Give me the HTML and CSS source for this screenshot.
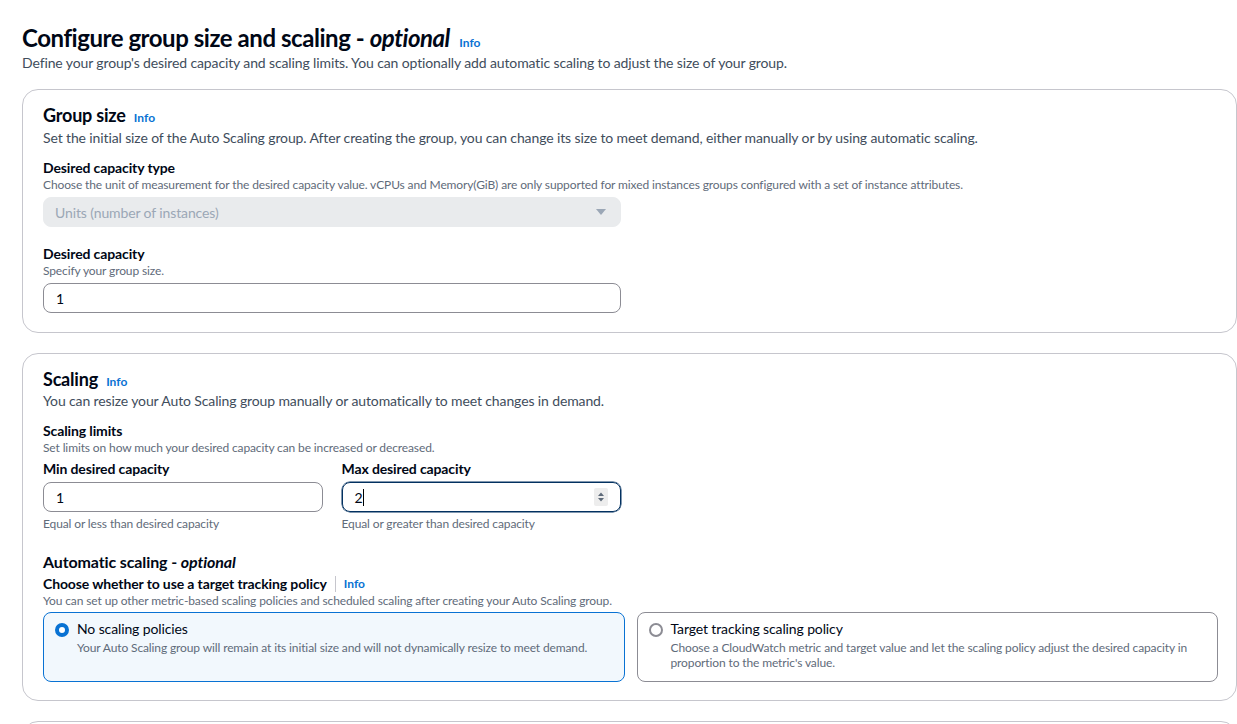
FILE: index.html
```html
<!DOCTYPE html>
<html>
<head>
<meta charset="utf-8">
<link rel="stylesheet" href="styles.css">
</head>
<body>
<div class="page">
  <header class="page-head">
    <h1 class="page-title">Configure group size and scaling - <i>optional</i> <a class="info info-lg">Info</a></h1>
    <p class="page-desc">Define your group's desired capacity and scaling limits. You can optionally add automatic scaling to adjust the size of your group.</p>
  </header>

  <section class="card">
    <h2 class="card-title">Group size <a class="info">Info</a></h2>
    <p class="card-desc">Set the initial size of the Auto Scaling group. After creating the group, you can change its size to meet demand, either manually or by using automatic scaling.</p>

    <div class="field field-first">
      <div class="label">Desired capacity type</div>
      <div class="hint">Choose the unit of measurement for the desired capacity value. vCPUs and Memory(GiB) are only supported for mixed instances groups configured with a set of instance attributes.</div>
      <div class="select">
        <span>Units (number of instances)</span>
        <svg class="caret" width="12" height="8" viewBox="0 0 12 8"><path d="M1 1h10L6 7z" fill="#9ba7b6"/></svg>
      </div>
    </div>

    <div class="field">
      <div class="label">Desired capacity</div>
      <div class="hint">Specify your group size.</div>
      <div class="input">1</div>
    </div>
  </section>

  <section class="card card-scaling">
    <h2 class="card-title">Scaling <a class="info">Info</a></h2>
    <p class="card-desc card-desc-tight">You can resize your Auto Scaling group manually or automatically to meet changes in demand.</p>

    <div class="field field-limits">
      <div class="label">Scaling limits</div>
      <div class="hint">Set limits on how much your desired capacity can be increased or decreased.</div>
      <div class="pair">
        <div class="col">
          <div class="label">Min desired capacity</div>
          <div class="input">1</div>
          <div class="helper">Equal or less than desired capacity</div>
        </div>
        <div class="col">
          <div class="label">Max desired capacity</div>
          <div class="input input-focus"><span>2</span><span class="cursor"></span>
            <svg class="spin" width="14" height="18" viewBox="0 0 14 18"><rect width="14" height="18" rx="2" fill="#ededed"/><path d="M4 8h6L7 4.5z M4 10h6L7 13.5z" fill="#5f6b7a"/></svg>
          </div>
          <div class="helper">Equal or greater than desired capacity</div>
        </div>
      </div>
    </div>

    <h3 class="sub-title">Automatic scaling - <i>optional</i></h3>
    <div class="label label-inline">Choose whether to use a target tracking policy <span class="sep"></span> <a class="info">Info</a></div>
    <div class="hint">You can set up other metric-based scaling policies and scheduled scaling after creating your Auto Scaling group.</div>

    <div class="tiles">
      <div class="tile tile-selected">
        <span class="radio radio-on"></span>
        <div class="tile-text">
          <div class="tile-title">No scaling policies</div>
          <div class="tile-desc">Your Auto Scaling group will remain at its initial size and will not dynamically resize to meet demand.</div>
        </div>
      </div>
      <div class="tile">
        <span class="radio"></span>
        <div class="tile-text">
          <div class="tile-title">Target tracking scaling policy</div>
          <div class="tile-desc">Choose a CloudWatch metric and target value and let the scaling policy adjust the desired capacity in proportion to the metric's value.</div>
        </div>
      </div>
    </div>
  </section>

  <section class="card card-next"></section>
</div>
</body>
</html>
```

FILE: styles.css
```css
* { box-sizing: border-box; }
html, body { margin: 0; padding: 0; }
body {
  background: #ffffff;
  color: #000716;
  font-family: "Lato", "Noto Sans", Arial, sans-serif;
  letter-spacing: -0.12px;
  overflow: hidden;
  height: 724px;
}
.page {
  padding: 23px 0 0 22px;
  width: 1237px;
}
.page-head { margin-bottom: 16px; }
.page-title {
  margin: 0;
  font-size: 24px;
  line-height: 30px;
  font-weight: 700;
  letter-spacing: -0.45px;
}
.page-title i { font-weight: 700; }
.info {
  color: #0972d3;
  font-size: 12px;
  line-height: 1;
  font-weight: 700;
  font-style: normal;
  letter-spacing: 0;
  margin-left: 4px;
}
.page-desc {
  margin: 0;
  font-size: 14px;
  line-height: 20px;
  color: #414d5c;
}
.card {
  width: 1215px;
  border: 1px solid #c6c6cd;
  border-radius: 16px;
  padding: 14px 18px 19px 20px;
  margin-bottom: 20px;
  background: #fff;
}
.card-scaling { padding-bottom: 18px; }
.card-title {
  margin: 0;
  font-size: 18px;
  line-height: 22px;
  font-weight: 700;
  letter-spacing: -0.2px;
}
.card-desc {
  margin: 2px 0 0;
  font-size: 14px;
  line-height: 20px;
  color: #414d5c;
}
.card-desc-tight { margin-top: 1px; }
.field { margin-top: 18px; }
.field-first { margin-top: 11px; }
.field-limits { margin-top: 11px; }
.label {
  font-size: 14px;
  line-height: 18px;
  font-weight: 700;
  color: #000716;
}
.hint {
  font-size: 12px;
  line-height: 16px;
  color: #5f6b7a;
}
.select {
  margin-top: 4px;
  width: 578px;
  height: 30px;
  background: #e9ebed;
  border: 1px solid #e9ebed;
  border-radius: 8px;
  display: flex;
  align-items: center;
  justify-content: space-between;
  padding: 0 13px 0 11px;
  font-size: 14px;
  color: #9ba7b6;
}
.input {
  margin-top: 4px;
  width: 578px;
  height: 30px;
  border: 1px solid #8c8c94;
  border-radius: 8px;
  display: flex;
  align-items: center;
  padding: 0 12px 0 12px;
  font-size: 14px;
  color: #000716;
  position: relative;
}
.pair {
  display: flex;
  gap: 19px;
  margin-top: 4px;
  width: 578px;
}
.col { flex: 1; }
.col .input { width: 100%; margin-top: 4px; }
.input-focus { border-color: #033160; box-shadow: 0 0 0 0.5px #033160; }
.cursor {
  display: inline-block;
  width: 1.5px;
  height: 17px;
  background: #000;
}
.spin { position: absolute; right: 12px; top: 5px; }
.helper {
  margin-top: 4px;
  font-size: 12px;
  line-height: 16px;
  color: #5f6b7a;
}
.sub-title {
  margin: 20px 0 0;
  font-size: 16px;
  line-height: 20px;
  font-weight: 700;
}
.label-inline { margin-top: 3px; display: flex; align-items: center; }
.sep {
  display: inline-block;
  width: 1px;
  height: 16px;
  background: #c6c6cd;
  margin: 0 6px 0 8px;
}
.label-inline .info { margin-left: 2px; }
.tiles {
  margin-top: 3px;
  display: grid;
  grid-template-columns: 1fr 1fr;
  gap: 12px;
}
.tile {
  border: 1px solid #8c8c94;
  border-radius: 8px;
  height: 70px;
  padding: 7px 12px 0 11px;
  display: flex;
  gap: 8px;
  align-items: flex-start;
}
.tile-selected {
  background: #f2f8fd;
  border-color: #0972d3;
}
.radio {
  flex: none;
  width: 14px;
  height: 14px;
  border-radius: 50%;
  border: 2px solid #8c8c94;
  margin-top: 3px;
  background: #fff;
}
.radio-on { border: 4px solid #0972d3; }
.tile-title {
  font-size: 14px;
  line-height: 18px;
}
.tile-desc {
  margin-top: 2px;
  font-size: 12px;
  line-height: 15px;
  color: #5f6b7a;
}
.card-next { height: 40px; margin-bottom: 0; }
```
